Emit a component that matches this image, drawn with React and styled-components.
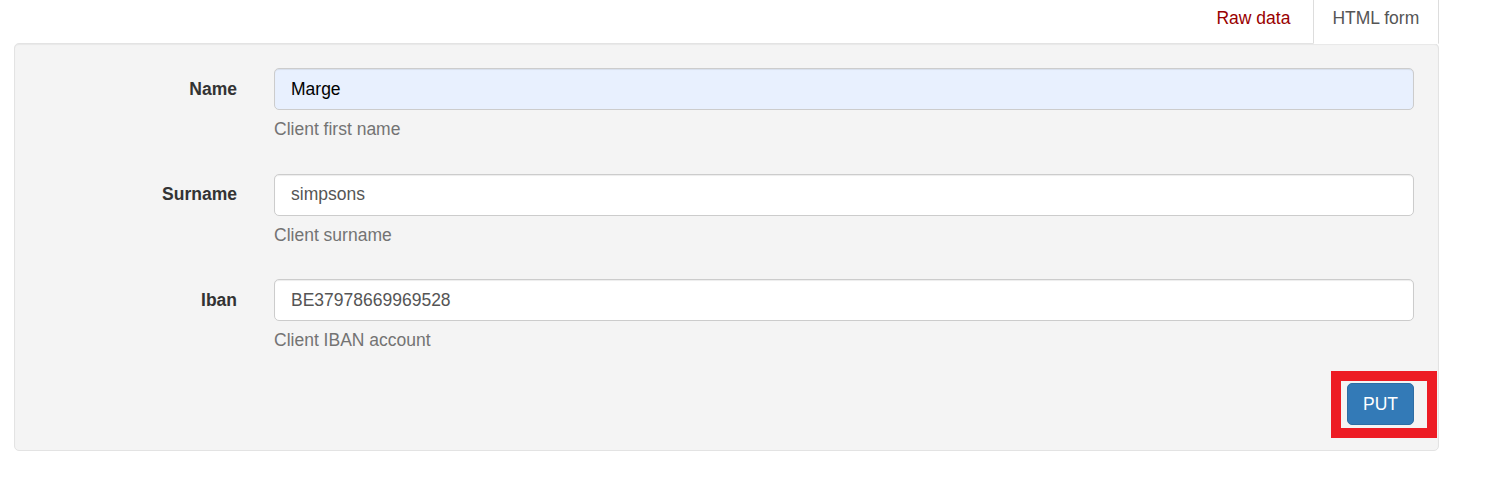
import React from "react";
import styled, { createGlobalStyle } from "styled-components";

const Global = createGlobalStyle`
  html, body { margin: 0; padding: 0; background: #fff; }
  body {
    font-family: "Liberation Sans", Arial, sans-serif;
    font-size: 17.5px;
    line-height: 25px;
    color: #333;
  }
  * { box-sizing: border-box; }
`;

const Page = styled.div`
  width: 1500px;
  height: 478px;
  overflow: hidden;
  padding: 0 61px 0 14px;
`;

const Tabs = styled.ul`
  list-style: none;
  margin: -8px 0 -1px 0;
  padding: 0;
  display: flex;
  justify-content: flex-end;
  gap: 2.5px;
  position: relative;
  z-index: 1;
`;

const Tab = styled.li`
  display: block;
  padding: 12.5px 18.75px;
  border: 1px solid ${(p) => (p.$active ? "#ddd" : "transparent")};
  border-bottom-color: transparent;
  border-radius: 5px 5px 0 0;
  background: ${(p) => (p.$active ? "#fff" : "transparent")};
  color: ${(p) => (p.$active ? "#555" : "#990000")};
  line-height: 25px;
  cursor: pointer;
`;

const Well = styled.div`
  background: #f4f4f4;
  border: 1px solid #e3e3e3;
  border-radius: 5px;
  box-shadow: inset 0 1px 1px rgba(0, 0, 0, 0.05);
  padding: 24px 24px 25px 24px;
`;

const Form = styled.form`
  display: flex;
  flex-direction: column;
`;

const Group = styled.div`
  display: grid;
  grid-template-columns: 198px 1fr;
  column-gap: 37px;
  margin-bottom: ${(p) => (p.$last ? "18px" : "19.5px")};
`;

const Label = styled.label`
  text-align: right;
  font-weight: bold;
  padding-top: 8.5px;
  line-height: 25px;
  color: #333;
`;

const Field = styled.div`
  display: flex;
  flex-direction: column;
`;

const Input = styled.input`
  height: 42px;
  width: 100%;
  padding: 7.5px 16px;
  font-family: inherit;
  font-size: 17.5px;
  line-height: 25px;
  color: ${(p) => (p.$autofill ? "#000" : "#555")};
  background: ${(p) => (p.$autofill ? "#e8f0fe" : "#fff")};
  border: 1px solid #ccc;
  border-radius: 5px;
  box-shadow: inset 0 1px 1px rgba(0, 0, 0, 0.075);
  outline: none;
`;

const Help = styled.span`
  display: block;
  margin: 7px 0 12px;
  color: #737373;
  line-height: 25px;
`;

const Actions = styled.div`
  display: flex;
  justify-content: flex-end;
`;

const Highlight = styled.div`
  position: relative;
  display: inline-flex;
`;

const Annotation = styled.div`
  position: absolute;
  left: -16px;
  top: -12px;
  right: -23px;
  bottom: -13px;
  border: 10px solid #ed1c24;
  pointer-events: none;
`;

const Button = styled.button`
  height: 42px;
  padding: 7.5px 15px;
  font-family: inherit;
  font-size: 17.5px;
  line-height: 25px;
  color: #fff;
  background: #337ab7;
  border: 1px solid #2e6da4;
  border-radius: 5px;
  cursor: pointer;
`;

const fields = [
  { label: "Name", value: "Marge", help: "Client first name", autofill: true },
  { label: "Surname", value: "simpsons", help: "Client surname" },
  { label: "Iban", value: "BE37978669969528", help: "Client IBAN account" },
];

export default function App() {
  return (
    <>
      <Global />
      <Page>
        <Tabs>
          <Tab>Raw data</Tab>
          <Tab $active>HTML form</Tab>
        </Tabs>
        <Well>
          <Form onSubmit={(e) => e.preventDefault()}>
            {fields.map((f, i) => (
              <Group key={f.label} $last={i === fields.length - 1}>
                <Label>{f.label}</Label>
                <Field>
                  <Input defaultValue={f.value} $autofill={f.autofill} />
                  <Help>{f.help}</Help>
                </Field>
              </Group>
            ))}
            <Actions>
              <Highlight>
                <Button type="submit">PUT</Button>
                <Annotation />
              </Highlight>
            </Actions>
          </Form>
        </Well>
      </Page>
    </>
  );
}
